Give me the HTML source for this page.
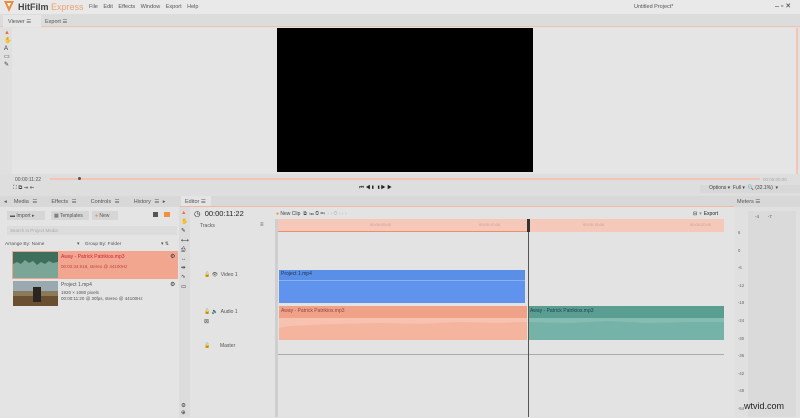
<!DOCTYPE html><html><head><style>
*{margin:0;padding:0;box-sizing:border-box}
body{width:800px;height:417px;overflow:hidden;background:#e2e2e2;font-family:"Liberation Sans",sans-serif;font-size:5px;color:#555;position:relative}
.a{position:absolute}
</style></head><body>
<div class="a" style="left:0;top:0;width:800px;height:14px;background:#e9e9e9"></div>
<svg class="a" style="left:4px;top:1px" width="10" height="11"><path d="M0 0 L10 0 L5 11Z" fill="#f08a3c"/><path d="M3 2 L7 2 L5 6Z" fill="#fff"/></svg>
<div class="a" style="left:18px;top:2px;font-size:9px;font-weight:bold;color:#444">HitFilm <span style="color:#f0a070;font-weight:normal">Express</span></div>
<div class="a" style="left:89px;top:4px;font-size:5.5px;color:#555;word-spacing:4px">File Edit Effects Window Export Help</div>
<div class="a" style="left:634px;top:4px;font-size:5.5px">Untitled Project*</div>
<div class="a" style="left:775px;top:2px;font-size:7px;color:#333">– ▫ ✕</div>
<div class="a" style="left:0;top:14px;width:800px;height:13px;background:#dcdcdc;border-bottom:1px solid #f0c0b0"></div>
<div class="a" style="left:3px;top:15px;width:38px;height:12px;background:#e6e6e6"></div>
<div class="a" style="left:8px;top:19px;font-size:5.5px">Viewer ☰</div>
<div class="a" style="left:45px;top:19px;font-size:5.5px">Export ☰</div>
<div class="a" style="left:0;top:27px;width:12px;height:150px;background:#e0e0e0"></div>
<div class="a" style="left:12px;top:28px;width:786px;height:146px;background:#e5e5e5;border-right:2px solid #f3c4b4"></div>
<div class="a" style="left:4px;top:29px;font-size:6px;color:#e87040;line-height:8px">▲<br><span style="color:#333">✋<br>A<br>▭<br>✎</span></div>
<div class="a" style="left:277px;top:28px;width:256px;height:144px;background:#000"></div>
<div class="a" style="left:0;top:174px;width:800px;height:22px;background:#dedede"></div>
<div class="a" style="left:15px;top:177px;font-size:5px">00:00:11:22</div>
<div class="a" style="left:50px;top:178px;width:710px;height:2px;background:#f3c4b4"></div>
<div class="a" style="left:78px;top:177px;width:3px;height:3px;background:#555;border-radius:50%"></div>
<div class="a" style="left:763px;top:177px;font-size:4.5px;color:#aaa">00:05:00:00</div>
<div class="a" style="left:13px;top:185px;font-size:5.5px;color:#333">⛶ ⧉ ⇥ ⇤</div>
<div class="a" style="left:359px;top:185px;font-size:5.5px;color:#222">⏮ ◀▮ ▮▶ ▶</div>
<div class="a" style="left:700px;top:185px;width:100px;height:8px;background:#d8d8d8;font-size:5px;padding-left:9px;color:#444">Options ▾ &nbsp;Full ▾ &nbsp;🔍 (32.1%) &nbsp;▾</div>
<div class="a" style="left:0;top:196px;width:800px;height:11px;background:#d8d8d8"></div>
<div class="a" style="left:4px;top:199px;font-size:5.5px;word-spacing:2px">◂ &nbsp;Media ☰ &nbsp;&nbsp; Effects ☰ &nbsp;&nbsp; Controls ☰ &nbsp;&nbsp; History ☰ ▸</div>
<div class="a" style="left:181px;top:196px;width:30px;height:11px;background:#e4e4e4"></div>
<div class="a" style="left:185px;top:199px;font-size:5.5px">Editor ☰</div>
<div class="a" style="left:737px;top:199px;font-size:5.5px">Meters ☰</div>
<div class="a" style="left:180px;top:206px;width:554px;height:1px;background:#f0b8a6"></div>
<div class="a" style="left:0;top:207px;width:179px;height:210px;background:#e4e4e4"></div>
<div class="a" style="left:7px;top:211px;width:38px;height:9px;background:#d6d6d6;font-size:5px;padding:2px 3px">▬ Import ▸</div>
<div class="a" style="left:51px;top:211px;width:38px;height:9px;background:#d6d6d6;font-size:5px;padding:2px 3px">▦ Templates</div>
<div class="a" style="left:92px;top:211px;width:26px;height:9px;background:#d6d6d6;font-size:5px;padding:2px 3px"><span style="color:#f09040">●</span> New</div>
<div class="a" style="left:153px;top:212px;width:5px;height:5px;background:#555"></div>
<div class="a" style="left:164px;top:212px;width:6px;height:5px;background:#f09040"></div>
<div class="a" style="left:7px;top:226px;width:170px;height:9px;background:#dcdcdc;font-size:4.5px;padding:2px 3px;color:#aaa">Search in Project Media</div>
<div class="a" style="left:5px;top:242px;font-size:4.8px">Arrange By: Name</div>
<div class="a" style="left:77px;top:242px;font-size:4.8px">▾ &nbsp;&nbsp; Group By: Folder</div>
<div class="a" style="left:161px;top:242px;font-size:4.8px">▾ ⇅</div>
<div class="a" style="left:12px;top:251px;width:166px;height:28px;background:#f2a68f"></div>
<svg class="a" style="left:13px;top:252px" width="45" height="26"><rect width="45" height="26" fill="#3e6e5c"/><path d="M0 26V12L4 10 8 12 12 8 16 11 20 9 24 13 28 10 32 12 36 9 40 11 45 10V26Z" fill="#7aa597"/></svg>
<div class="a" style="left:61px;top:254px;font-size:5px;color:#c24">Away - Patrick Patrikios.mp3</div>
<div class="a" style="left:61px;top:264px;font-size:4.5px;color:#b44">00:02:34:018, stereo @ 44100Hz</div>
<div class="a" style="left:170px;top:253px;font-size:6px;color:#333">⚙</div>
<svg class="a" style="left:13px;top:281px" width="45" height="25"><rect width="45" height="25" fill="#8a7a5a"/><rect width="45" height="10" fill="#9aa8b0"/><rect y="15" width="45" height="10" fill="#6a5030"/><rect x="20" y="6" width="8" height="15" fill="#2a2520"/></svg>
<div class="a" style="left:61px;top:282px;font-size:5px">Project 1.mp4</div>
<div class="a" style="left:61px;top:290px;font-size:4.5px;line-height:6px">1920 × 1080 pixels<br>00:00:11:20 @ 30fps, stereo @ 44100Hz</div>
<div class="a" style="left:170px;top:281px;font-size:6px;color:#333">⚙</div>
<div class="a" style="left:179px;top:207px;width:11px;height:210px;background:#dcdcdc"></div>
<div class="a" style="left:181px;top:209px;font-size:5.5px;line-height:9.2px;color:#333"><span style="color:#e87040">▲</span><br>✋<br>✎<br>⟷<br>⎙<br>↔<br>⇹<br>∿<br>▭</div>
<div class="a" style="left:190px;top:207px;width:544px;height:210px;background:#e3e3e3"></div>
<div class="a" style="left:194px;top:209px;font-size:7.5px;color:#222">◷ &nbsp;00:00:11:22</div>
<div class="a" style="left:276px;top:211px;font-size:5px;color:#444"><span style="color:#f09040">●</span> New Clip &nbsp;⧉ &nbsp;⏮ ◎ ⏭ &nbsp;<span style="color:#bbb">› › ◎ ‹ › ›</span></div>
<div class="a" style="left:693px;top:211px;font-size:5px;color:#222">⊟ ♆ Export</div>
<div class="a" style="left:200px;top:223px;font-size:5px">Tracks</div>
<div class="a" style="left:260px;top:222px;font-size:6px">≡</div>
<div class="a" style="left:275px;top:219px;width:3px;height:198px;background:#cfcfcf"></div>
<div class="a" style="left:278px;top:219px;width:446px;height:13px;background:#f6c8b9"></div>
<div class="a" style="left:278px;top:231px;width:250px;height:1px;background:#e89070"></div>
<div class="a" style="left:370px;top:222px;font-size:4px;color:#c99">00:00:05:00</div>
<div class="a" style="left:479px;top:222px;font-size:4px;color:#c99">00:00:10:00</div>
<div class="a" style="left:583px;top:222px;font-size:4px;color:#c99">00:00:15:00</div>
<div class="a" style="left:690px;top:222px;font-size:4px;color:#c99">00:00:20:00</div>
<div class="a" style="left:204px;top:272px;font-size:5px">🔓 👁 &nbsp;Video 1</div>
<div class="a" style="left:279px;top:270px;width:246px;height:33px;background:#5f93ee;border-top:10px solid #5a8fe8"></div>
<div class="a" style="left:281px;top:271px;font-size:5px;color:#235">Project 1.mp4</div>
<div class="a" style="left:279px;top:280px;width:246px;height:1px;background:#8bb0f0"></div>
<div class="a" style="left:204px;top:309px;font-size:5px">🔓 🔈 &nbsp;Audio 1</div>
<div class="a" style="left:204px;top:318px;font-size:6px">⊠</div>
<div class="a" style="left:279px;top:306px;width:248px;height:34px;background:#f7c2b0"></div>
<svg class="a" style="left:279px;top:318px" width="248" height="22"><path d="M0 22V10L10 8 30 7 60 6 100 5 140 6 180 4 220 5 248 4V22Z" fill="#f5b49d"/></svg>
<div class="a" style="left:279px;top:306px;width:248px;height:12px;background:#f0a288"></div>
<div class="a" style="left:281px;top:308px;font-size:5px;color:#944">Away - Patrick Patrikios.mp3</div>
<div class="a" style="left:528px;top:306px;width:196px;height:34px;background:#86bdb3"></div>
<svg class="a" style="left:528px;top:318px" width="196" height="22"><path d="M0 22V4L40 5 80 3 120 5 160 4 196 4V22Z" fill="#75b2a7"/></svg>
<div class="a" style="left:528px;top:306px;width:196px;height:12px;background:#5a9d91"></div>
<div class="a" style="left:530px;top:308px;font-size:5px;color:#245">Away - Patrick Patrikios.mp3</div>
<div class="a" style="left:204px;top:343px;font-size:5px">🔓 &nbsp;&nbsp;&nbsp;&nbsp;&nbsp; Master</div>
<div class="a" style="left:278px;top:354px;width:446px;height:1px;background:#aaa"></div>
<div class="a" style="left:528px;top:219px;width:1px;height:198px;background:#555"></div>
<div class="a" style="left:527px;top:219px;width:3px;height:13px;background:#333"></div>
<div class="a" style="left:181px;top:403px;font-size:5.5px;line-height:7px;color:#333">⚙<br>⊕</div>
<div class="a" style="left:734px;top:207px;width:66px;height:210px;background:#e0e0e0"></div>
<div class="a" style="left:748px;top:211px;width:48px;height:206px;background:#dadada"></div>
<div class="a" style="left:755px;top:214px;font-size:4.5px">-4 &nbsp;&nbsp;&nbsp;&nbsp;&nbsp; -7</div>
<div class="a" style="left:738px;top:224px;font-size:4.2px;line-height:17.6px;color:#666">6<br>0<br>-6<br>-12<br>-18<br>-24<br>-30<br>-36<br>-42<br>-48<br>-54</div>
<div class="a" style="left:744px;top:401px;font-size:9px;color:#222">wtvid.com</div>
</body></html>
